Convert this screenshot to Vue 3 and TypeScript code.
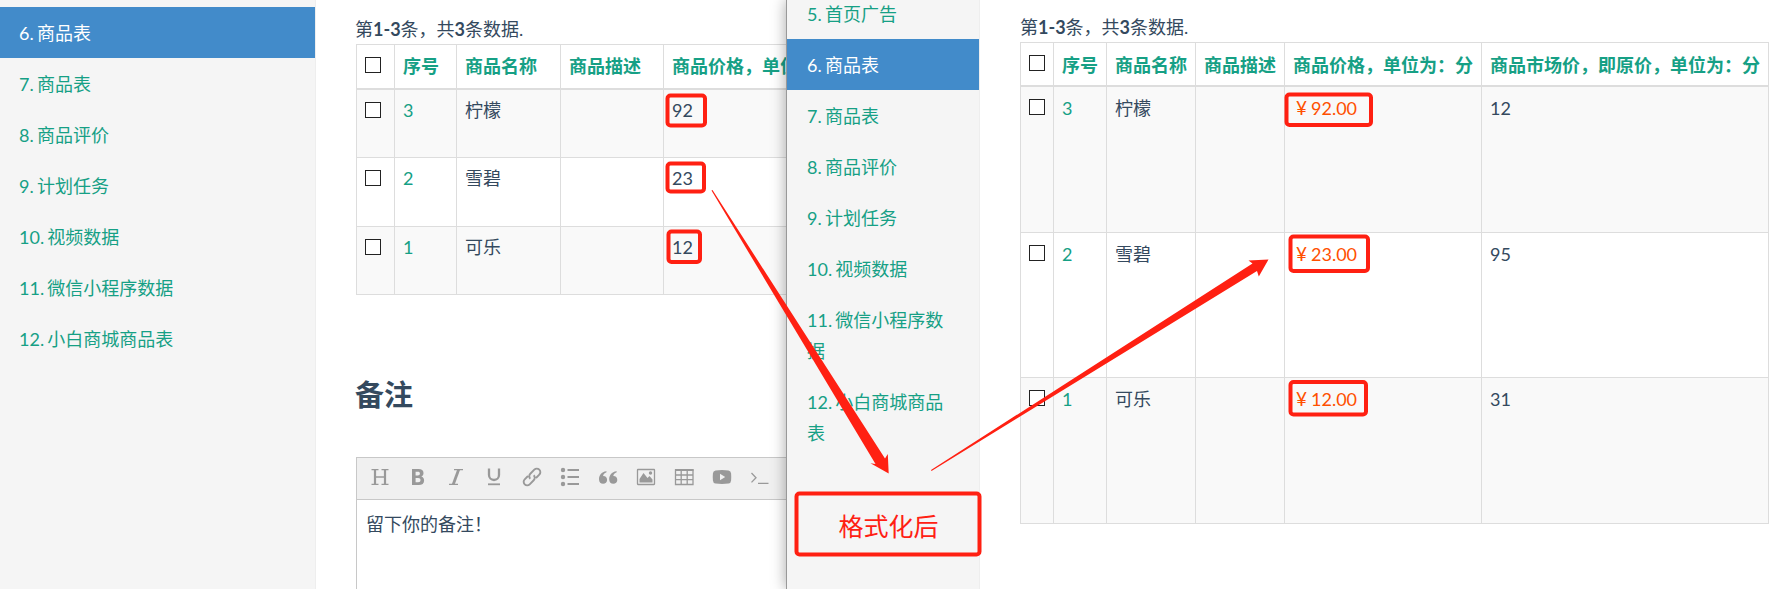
<script setup lang="ts">
interface MenuItem {
  id: number
  label: string
}

interface Product {
  id: number
  name: string
  price: string
  market: string
}

interface Box {
  x: number
  y: number
  w: number
  h: number
}

const menu: MenuItem[] = [
  { id: 5, label: '首页广告' },
  { id: 6, label: '商品表' },
  { id: 7, label: '商品表' },
  { id: 8, label: '商品评价' },
  { id: 9, label: '计划任务' },
  { id: 10, label: '视频数据' },
  { id: 11, label: '微信小程序数据' },
  { id: 12, label: '小白商城商品表' },
]

const rawRows: Product[] = [
  { id: 3, name: '柠檬', price: '92', market: '12' },
  { id: 2, name: '雪碧', price: '23', market: '95' },
  { id: 1, name: '可乐', price: '12', market: '31' },
]

const formatted = rawRows.map((r) => ({ ...r, price: Number(r.price).toFixed(2) }))

const marks: Box[] = [
  { x: 667.5, y: 95.5, w: 37.5, h: 30 },
  { x: 667.5, y: 163.5, w: 36.5, h: 28 },
  { x: 668.5, y: 231.5, w: 31.5, h: 30.5 },
  { x: 1286.5, y: 94.5, w: 84.5, h: 30.5 },
  { x: 1290.5, y: 236.5, w: 77.5, h: 34.5 },
  { x: 1290.5, y: 382, w: 75.5, h: 32.5 },
  { x: 796.5, y: 493.5, w: 183, h: 61 },
]
</script>

<template>
  <div class="screen">
    <section class="pane left">
      <nav class="side">
        <a v-for="m in menu.slice(1)" :key="m.id" class="item" :class="{ active: m.id === 6 }">{{ m.id }}. {{ m.label }}</a>
      </nav>
      <main class="content">
        <p class="count">第<b>1-3</b>条，共<b>3</b>条数据.</p>
        <table class="grid">
          <thead>
            <tr>
              <th class="c-check"><span class="check"></span></th>
              <th class="c-id">序号</th>
              <th class="c-name">商品名称</th>
              <th class="c-desc">商品描述</th>
              <th class="c-price">商品价格，单位为：分</th>
            </tr>
          </thead>
          <tbody>
            <tr v-for="r in rawRows" :key="r.id">
              <td><span class="check"></span></td>
              <td class="link">{{ r.id }}</td>
              <td>{{ r.name }}</td>
              <td></td>
              <td>{{ r.price }}</td>
            </tr>
          </tbody>
        </table>
        <h2>备注</h2>
        <div class="editor">
          <div class="tools">
            <svg viewBox="0 0 20 20"><path d="M1.500 2.600h7M11.500 2.600h7M1.500 17.400h7M11.500 17.400h7M5 10h10" stroke-width="1.300" /><path d="M5 2.500v15M15 2.500v15" stroke-width="2.200" /></svg>
            <svg viewBox="0 0 20 20"><path class="fill" fill-rule="evenodd" d="M4 2h6.500c3.200 0 5 1.500 5 4 0 1.700-.8 2.900-2.200 3.500 1.800.6 2.800 1.900 2.800 3.900 0 2.900-2 4.600-5.400 4.600H4zM7.600 4.700v3.700h2.200c1.400 0 2.100-.7 2.100-1.900s-.7-1.800-2.100-1.800zM7.600 11v4.300h2.600c1.500 0 2.300-.8 2.300-2.200S11.700 11 10.200 11z" /></svg>
            <svg viewBox="0 0 20 20"><path d="M8 2.600h9M3 17.400h9" stroke-width="1.400" /><path d="M12.700 2.500l-5.500 15" stroke-width="2.800" /></svg>
            <svg viewBox="0 0 20 20"><path d="M5 1.500v6.500a5 5 0 0 0 10 0V1.500" stroke-width="2.300" /><path d="M4 17.300h12" stroke-width="1.800" /></svg>
            <svg viewBox="0 0 20 20"><path d="M8.300 11.700a3.500 3.500 0 0 1 0-5l4-4a3.500 3.500 0 0 1 5 5l-3.300 3.300M11.700 8.300a3.500 3.500 0 0 1 0 5l-4 4a3.500 3.500 0 0 1-5-5L6 9" stroke-width="1.900" /></svg>
            <svg viewBox="0 0 20 20"><g class="fill"><circle cx="3" cy="3" r="2.200" /><circle cx="3" cy="10" r="2.200" /><circle cx="3" cy="17" r="2.200" /></g><path d="M7.500 3h11.500M7.500 10h11.500M7.500 17h11.500" stroke-width="2" /></svg>
            <svg viewBox="0 0 20 20"><g class="fill"><path d="M8.500 4.200C3.300 4.600 1 8.500 1 12.200c0 2.900 1.700 4.600 4.100 4.600 2.300 0 4-1.600 4-3.900 0-2.400-1.700-3.900-4-3.800.3-1.900 1.300-3.200 3.400-3.900z" /><path d="M18.700 4.200c-5.200.4-7.500 4.300-7.500 8 0 2.900 1.700 4.600 4.100 4.600 2.300 0 4-1.600 4-3.900 0-2.400-1.700-3.900-4-3.800.3-1.900 1.300-3.200 3.400-3.900z" /></g></svg>
            <svg viewBox="0 0 20 20"><rect x="1.500" y="2.500" width="17" height="15" rx=".5" stroke-width="1.300" /><path class="fill" d="M3.500 15.500v-3.500l4-6 4 5 2-2 3 3.500v3z" /><circle class="fill" cx="14.500" cy="6" r="1.700" /></svg>
            <svg viewBox="0 0 20 20"><path d="M1.500 3h17.500v14.500H1.500z M1.500 8h17.500M1.500 12.700h17.500M7.200 3v14.500M13.200 3v14.500" stroke-width="1.300" /><path d="M1 3h18.500" stroke-width="2" /></svg>
            <svg viewBox="0 0 20 20"><path class="fill" fill-rule="evenodd" d="M3.500 3.500Q10 2.600 16.500 3.500Q18.900 3.800 19.100 6.500Q19.400 10 19.100 13.500Q18.900 16.200 16.500 16.500Q10 17.400 3.500 16.500Q1.100 16.200.9 13.500Q.6 10 .9 6.500Q1.100 3.800 3.500 3.500zM8 6.800v6.400l5.200-3.200z" /></svg>
            <svg viewBox="0 0 20 20"><path d="M1.500 6l4.500 4.700-4.500 4.700M8 16.300h10.500" stroke-width="1.300" /></svg>
          </div>
          <div class="note">留下你的备注！</div>
        </div>
      </main>
    </section>

    <section class="pane right">
      <nav class="side">
        <a v-for="m in menu" :key="m.id" class="item" :class="{ active: m.id === 6 }">{{ m.id }}. {{ m.label }}</a>
      </nav>
      <main class="content">
        <p class="count">第<b>1-3</b>条，共<b>3</b>条数据.</p>
        <table class="grid">
          <thead>
            <tr>
              <th class="c-check"><span class="check"></span></th>
              <th class="c-id">序号</th>
              <th class="c-name">商品名称</th>
              <th class="c-desc">商品描述</th>
              <th class="c-price">商品价格，单位为：分</th>
              <th class="c-market">商品市场价，即原价，单位为：分</th>
            </tr>
          </thead>
          <tbody>
            <tr v-for="r in formatted" :key="r.id">
              <td><span class="check"></span></td>
              <td class="link">{{ r.id }}</td>
              <td>{{ r.name }}</td>
              <td></td>
              <td class="money"><span class="yen">¥</span>{{ r.price }}</td>
              <td>{{ r.market }}</td>
            </tr>
          </tbody>
        </table>
      </main>
    </section>

    <svg class="overlay" viewBox="0 0 1769 589">
      <rect v-for="(b, i) in marks" :key="i" :x="b.x" :y="b.y" :width="b.w" :height="b.h" rx="3" />
      <polygon points="711.500,190.500 712.500,190 885,458.500 887.800,454 888.700,473.500 870.500,463.200 875.500,464" />
      <polygon points="931,470 931.500,471 1257,271 1258.800,276.500 1268.500,259.500 1248.500,260.500 1252.500,263.500" />
      <text x="838.500" y="536">格式化后</text>
    </svg>
  </div>
</template>

<style>
body {
  margin: 0;
  overflow: hidden;
}
</style>

<style scoped>
.screen {
  position: relative;
  display: flex;
  width: 1769px;
  height: 589px;
  overflow: hidden;
  background: #fff;
  color: #34495e;
  font: 18px/31px Lato, "Noto Sans CJK SC", sans-serif;
}
.pane {
  display: flex;
  height: 589px;
  box-sizing: border-box;
  overflow: hidden;
  background: #fff;
}
.left {
  width: 786px;
  flex: none;
}
.right {
  position: relative;
  width: 983px;
  flex: none;
  border-left: 1px solid #999;
  box-shadow: 0 0 14px rgba(0, 0, 0, 0.35);
}
.side {
  flex: none;
  box-sizing: border-box;
  background: #f5f5f5;
  border-right: 1px solid #eee;
}
.left .side {
  width: 316px;
  padding-top: 7px;
}
.right .side {
  width: 193px;
  height: 601px;
  margin-top: -12px;
}
.item {
  display: block;
  padding: 11px 19px 9px;
  color: #16a085;
  word-spacing: -1.4px;
}
.right .item {
  padding: 11px 20px 9px;
}
.item.active {
  background: #428bca;
  color: #fff;
}
.content {
  flex: 1;
  min-width: 0;
}
.left .content {
  padding: 13px 0 0 40px;
}
.right .content {
  padding: 11px 0 0 40px;
}
.count {
  box-sizing: border-box;
  margin: 0 0 0 -1px;
  height: 31px;
  padding-top: 1px;
}
.right .count {
  margin-left: 0;
}
.grid {
  table-layout: fixed;
  border-collapse: separate;
  border-spacing: 0;
  border-left: 1px solid #ddd;
  border-top: 1px solid #ddd;
}
.left .grid {
  width: 524px;
}
.right .grid {
  width: 749px;
}
.grid th,
.grid td {
  box-sizing: border-box;
  padding: 6px 0 0 8px;
  border-right: 1px solid #ddd;
  border-bottom: 1px solid #ddd;
  text-align: left;
  vertical-align: top;
  white-space: nowrap;
}
.grid th {
  color: #16a085;
  border-bottom-width: 2px;
  height: 45px;
}
.right .grid th {
  height: 44px;
  padding-top: 7px;
}
.left .grid td {
  padding-top: 5px;
}
.left tbody tr {
  height: 68px;
}
.left tbody tr:nth-child(2) {
  height: 69px;
}
.right tbody tr {
  height: 146px;
}
.right tbody tr:nth-child(2) {
  height: 145px;
}
tbody tr:nth-child(odd) {
  background: #f9f9f9;
}
.left .c-check { width: 38px; }
.left .c-id { width: 62px; }
.left .c-name { width: 104px; }
.left .c-desc { width: 103px; }
.left .c-price { width: 216px; }
.right .c-check { width: 33px; }
.right .c-id { width: 53px; }
.right .c-name { width: 89px; }
.right .c-desc { width: 89px; }
.right .c-price { width: 197px; }
.right .c-market { width: 287px; }
.check {
  display: block;
  box-sizing: border-box;
  width: 16px;
  height: 16px;
  margin-top: 6px;
  border: 1px solid #222;
  background: #fff;
}
.left td .check {
  margin-top: 7px;
}
.right th .check {
  margin-top: 5px;
}
.link {
  color: #16a085;
}
.grid .money {
  padding-left: 11px;
  color: #ff5000;
}
.yen {
  display: inline-block;
  width: 15px;
  font-size: 19px;
  line-height: 20px;
}
h2 {
  margin: 80px 0 0 -1px;
  font-size: 29px;
  line-height: 40px;
  font-weight: 700;
}
.editor {
  width: 600px;
  height: 200px;
  margin-top: 42px;
  border: 1px solid #c8c8c8;
}
.tools {
  display: flex;
  align-items: center;
  gap: 18px;
  box-sizing: border-box;
  height: 42px;
  padding: 0 0 3px 13px;
  background: #f0f0f0;
  border-bottom: 1px solid #c8c8c8;
}
.tools svg {
  width: 20px;
  height: 20px;
  flex: none;
  fill: none;
  stroke: #999;
}
.tools .fill {
  fill: #999;
  stroke: none;
}
.note {
  padding: 9px;
}
.overlay {
  position: absolute;
  inset: 0;
  width: 1769px;
  height: 589px;
}
.overlay rect {
  fill: none;
  stroke: #ff2012;
  stroke-width: 4;
}
.overlay polygon {
  fill: #ff2012;
}
.overlay text {
  fill: #ff2012;
  font-size: 25px;
}
</style>
